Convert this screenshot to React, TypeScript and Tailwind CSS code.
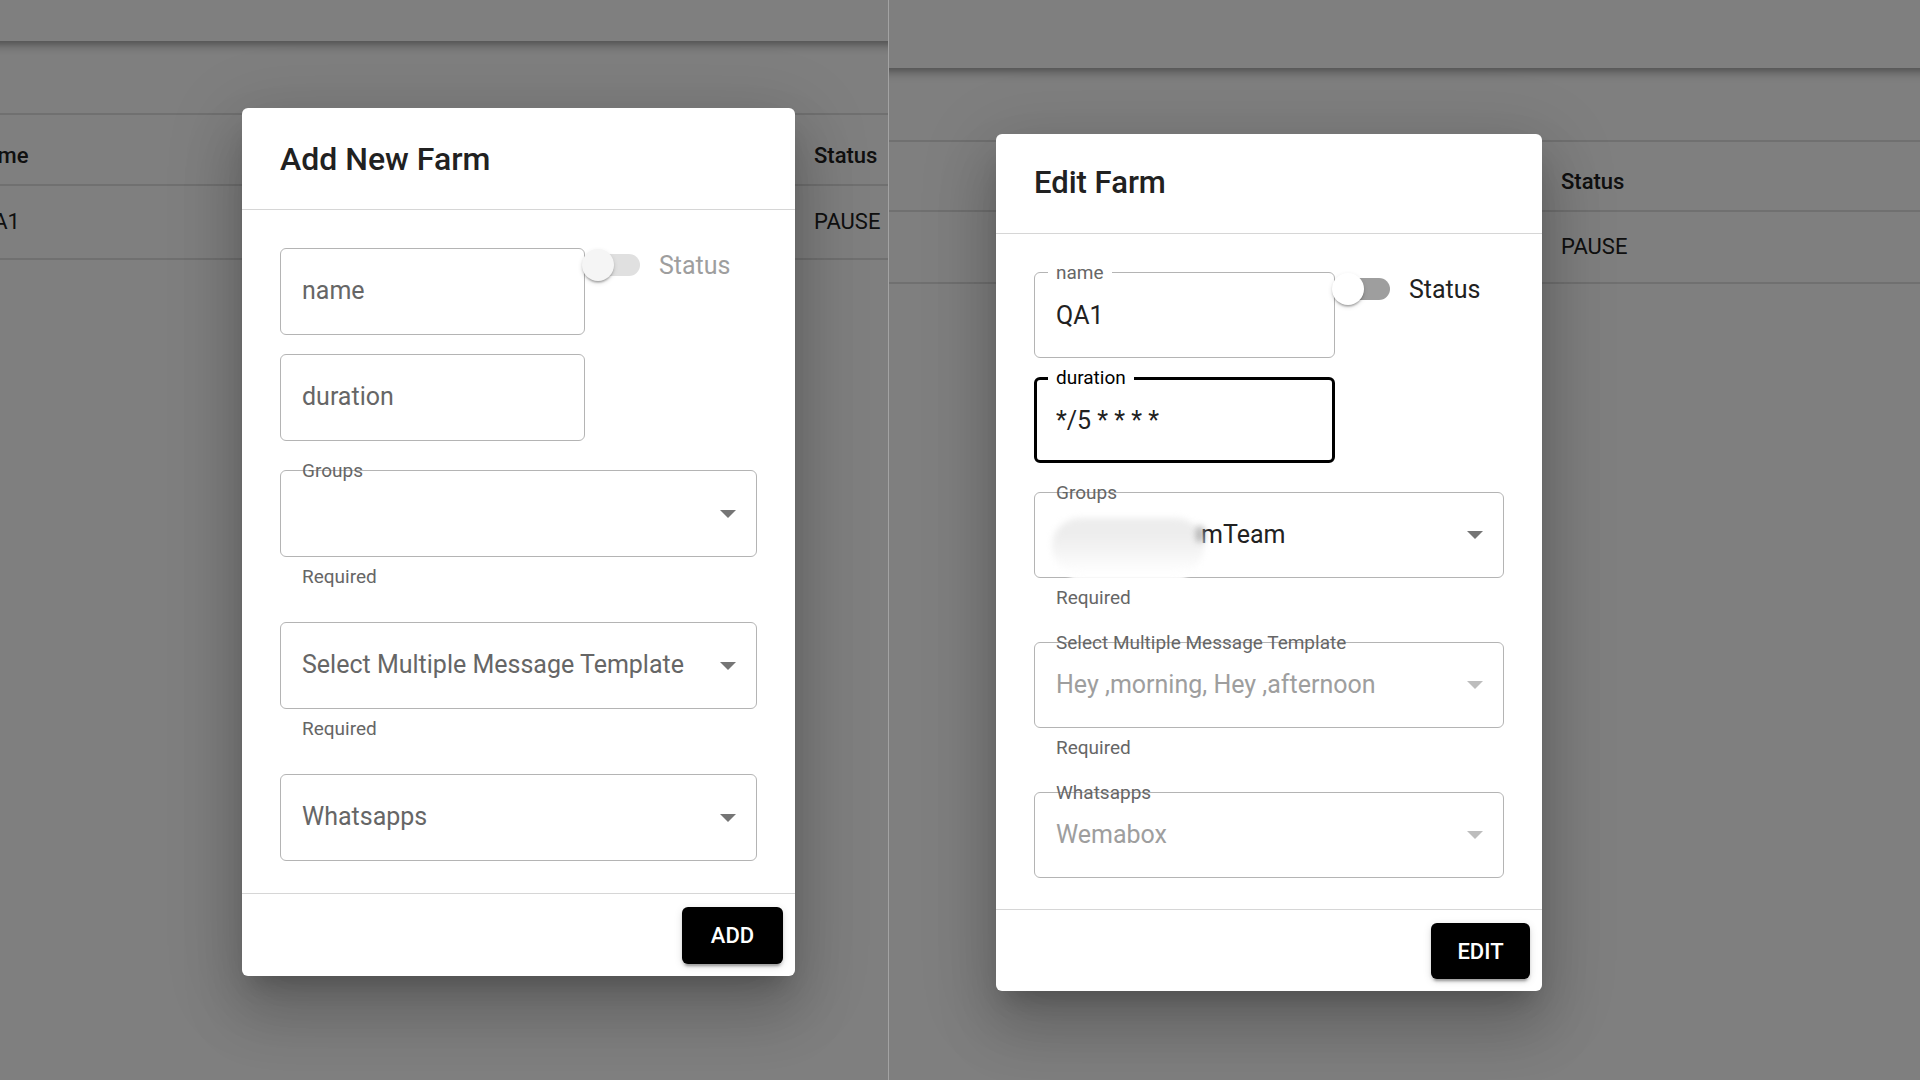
import { useId, type ReactNode } from "react";
import clsx from "clsx";

type Size = "large" | "medium";

const SIZES = {
  large: {
    dialog: "w-[553px]",
    title: "h-[101px] text-[32px]",
    body: "pb-8",
    field: "h-[87px]",
    short: "w-[305px]",
    helper: "h-[65px]",
    button: "h-[57px] w-[101px]",
  },
  medium: {
    dialog: "w-[546px]",
    title: "h-[99px] text-[31px]",
    body: "pb-[31px]",
    field: "h-[86px]",
    short: "w-[301px]",
    helper: "h-[64px]",
    button: "h-14 w-[99px]",
  },
};

function FieldLabel({
  id,
  floating,
  notched,
  focused,
  children,
}: {
  id: string;
  floating: boolean;
  notched?: boolean;
  focused?: boolean;
  children: ReactNode;
}) {
  return (
    <label
      htmlFor={id}
      className={clsx(
        "pointer-events-none absolute left-[14px] flex items-center px-2 leading-none whitespace-nowrap",
        focused ? "text-black" : "text-[#666]",
        floating ? "top-0 -translate-y-1/2 text-[19px]" : "top-0 bottom-0.5 text-[25px]",
        notched && "bg-white",
      )}
    >
      {children}
    </label>
  );
}

function TextField({
  size,
  label,
  value = "",
  focused = false,
}: {
  size: Size;
  label: string;
  value?: string;
  focused?: boolean;
}) {
  const id = useId();
  const s = SIZES[size];
  return (
    <div className={clsx("relative", s.field, s.short)}>
      <input
        id={id}
        type="text"
        defaultValue={value}
        className={clsx(
          "h-full w-full rounded-md bg-transparent text-[25px] text-[#212121] outline-none",
          focused ? "border-[3px] border-black px-[19px]" : "border border-[#b4b4b4] px-[21px]",
        )}
      />
      <FieldLabel id={id} floating={value !== ""} notched={value !== ""} focused={focused}>
        {label}
      </FieldLabel>
    </div>
  );
}

function SelectField({
  size,
  label,
  value = "",
  floating = false,
  disabled = false,
  redacted = false,
}: {
  size: Size;
  label: string;
  value?: string;
  floating?: boolean;
  disabled?: boolean;
  redacted?: boolean;
}) {
  const id = useId();
  const s = SIZES[size];
  return (
    <div className={clsx("relative", s.field)}>
      <select
        id={id}
        disabled={disabled}
        defaultValue={value}
        className={clsx(
          "h-full w-full appearance-none rounded-md border border-[#b4b4b4] bg-transparent pr-14 text-[25px] opacity-100 outline-none",
          disabled ? "text-[#9e9e9e]" : "text-[#212121]",
          redacted ? "pl-[166px]" : "pl-[21px]",
        )}
      >
        <option value={value}>{value}</option>
      </select>
      {redacted && (
        <span className="pointer-events-none absolute top-[26px] left-[18px] h-[62px] w-[152px]">
          <span className="absolute inset-x-4 bottom-0 h-4 rounded-full bg-white blur-[2px]" />
          <span className="absolute inset-x-0 top-0 h-14 rounded-[28px] bg-linear-to-b from-[#ededed] from-30% to-white blur-[3px]" />
          <span className="absolute top-2 right-0 h-4 w-2 rounded-full bg-[#8a8a8a] opacity-60 blur-[3px]" />
        </span>
      )}
      <svg
        viewBox="0 0 16 8"
        aria-hidden="true"
        className={clsx(
          "pointer-events-none absolute top-1/2 right-[21px] h-2 w-4 -translate-y-1/2",
          disabled ? "fill-[#bdbdbd]" : "fill-[#757575]",
        )}
      >
        <path d="M0 0h16L8 8z" />
      </svg>
      <FieldLabel id={id} floating={floating}>
        {label}
      </FieldLabel>
    </div>
  );
}

function Helper({ size }: { size: Size }) {
  return <p className={clsx("px-[22px] pt-1 text-[19px] leading-8 text-[#666]", SIZES[size].helper)}>Required</p>;
}

function StatusSwitch({ disabled = false }: { disabled?: boolean }) {
  const id = useId();
  return (
    <div className="ml-0.5 flex h-[34px] items-center gap-[19px] text-[25px]">
      <input
        id={id}
        type="checkbox"
        role="switch"
        disabled={disabled}
        className={clsx(
          "relative h-[22px] w-[53px] appearance-none rounded-full",
          "before:absolute before:-top-[5px] before:-left-[5px] before:size-8 before:rounded-full",
          "before:shadow-[0_3px_2px_-2px_rgba(0,0,0,0.2),0_2px_2px_rgba(0,0,0,0.14),0_2px_5px_rgba(0,0,0,0.12)]",
          disabled ? "bg-[#e0e0e0] before:bg-[#f5f5f5]" : "bg-[#9e9e9e] before:bg-white",
        )}
      />
      <label htmlFor={id} className={clsx("leading-none", disabled ? "text-[#9e9e9e]" : "text-[#212121]")}>
        Status
      </label>
    </div>
  );
}

function FarmDialog({
  size,
  title,
  action,
  children,
}: {
  size: Size;
  title: string;
  action: string;
  children: ReactNode;
}) {
  const s = SIZES[size];
  const id = useId();
  return (
    <form
      role="dialog"
      aria-labelledby={id}
      onSubmit={(event) => event.preventDefault()}
      className={clsx(
        "shrink-0 rounded-md bg-white shadow-[0_17px_23px_-11px_rgba(0,0,0,0.2),0_37px_59px_5px_rgba(0,0,0,0.14),0_14px_71px_12px_rgba(0,0,0,0.12)]",
        s.dialog,
      )}
    >
      <h2 id={id} className={clsx("flex items-center px-[38px] font-medium text-[#212121]", s.title)}>
        {title}
      </h2>
      <div className={clsx("border-y border-[#d6d6d6] px-[38px] pt-[38px]", s.body)}>{children}</div>
      <div className="flex justify-end p-3 pt-[13px]">
        <button
          type="submit"
          className={clsx(
            "rounded-md bg-black text-[22px] font-medium text-white shadow-[0_5px_2px_-3px_rgba(0,0,0,0.2),0_3px_3px_rgba(0,0,0,0.14),0_2px_8px_rgba(0,0,0,0.12)]",
            s.button,
          )}
        >
          {action}
        </button>
      </div>
    </form>
  );
}

function Backdrop({ className, children }: { className: string; children: ReactNode }) {
  return <div className={clsx("absolute inset-0 flex items-start bg-black/50", className)}>{children}</div>;
}

function AppBar({ className }: { className: string }) {
  return (
    <header
      className={clsx(
        "-mx-8 bg-white shadow-[0_3px_6px_-1px_rgba(0,0,0,0.2),0_6px_8px_rgba(0,0,0,0.14),0_2px_16px_rgba(0,0,0,0.12)]",
        className,
      )}
    />
  );
}

function FarmTable({
  name,
  firstColumn,
  headRow,
  bodyRow,
  className,
}: {
  name?: string;
  firstColumn: string;
  headRow: string;
  bodyRow: string;
  className: string;
}) {
  return (
    <table className={clsx("table-fixed border-collapse text-left text-[22px] leading-none text-[#212121]", className)}>
      <thead>
        <tr className={clsx("border-y-2 border-[#e0e0e0]", headRow)}>
          <th className={clsx("pt-3 font-medium", firstColumn)}>{name && "Name"}</th>
          <th className="pt-3 font-medium">Status</th>
        </tr>
      </thead>
      <tbody>
        <tr className={clsx("border-b-2 border-[#e0e0e0]", bodyRow)}>
          <td className="pl-2">{name}</td>
          <td>PAUSE</td>
        </tr>
      </tbody>
    </table>
  );
}

export default function App() {
  return (
    <main className="grid min-h-screen grid-cols-[888fr_1032fr] bg-white font-['Roboto',sans-serif]">
      <section className="relative overflow-hidden">
        <AppBar className="h-[41px]" />
        <FarmTable
          name="QA1"
          className="-ml-[30px] mt-[72px] w-[calc(100%+30px)]"
          firstColumn="w-[844px]"
          headRow="h-[71px]"
          bodyRow="h-[74px]"
        />
        <Backdrop className="pt-[108px] pl-[242px]">
          <FarmDialog size="large" title="Add New Farm" action="ADD">
            <div className="flex items-start">
              <TextField size="large" label="name" />
              <StatusSwitch disabled />
            </div>
            <div className="mt-[19px] mb-[29px]">
              <TextField size="large" label="duration" />
            </div>
            <SelectField size="large" label="Groups" floating />
            <Helper size="large" />
            <SelectField size="large" label="Select Multiple Message Template" />
            <Helper size="large" />
            <SelectField size="large" label="Whatsapps" />
          </FarmDialog>
        </Backdrop>
      </section>

      <section className="relative overflow-hidden">
        <AppBar className="h-[68px]" />
        <FarmTable className="mt-[72px] w-full" firstColumn="w-[673px]" headRow="h-[70px]" bodyRow="h-[72px]" />
        <Backdrop className="border-l border-[#a3a3a3] pt-[134px] pl-[107px]">
          <FarmDialog size="medium" title="Edit Farm" action="EDIT">
            <div className="flex items-start">
              <TextField size="medium" label="name" value="QA1" />
              <StatusSwitch />
            </div>
            <div className="mt-[19px] mb-[29px]">
              <TextField size="medium" label="duration" value="*/5 * * * *" focused />
            </div>
            <SelectField size="medium" label="Groups" value="mTeam" floating redacted />
            <Helper size="medium" />
            <SelectField
              size="medium"
              label="Select Multiple Message Template"
              value="Hey ,morning, Hey ,afternoon"
              floating
              disabled
            />
            <Helper size="medium" />
            <SelectField size="medium" label="Whatsapps" value="Wemabox" floating disabled />
          </FarmDialog>
        </Backdrop>
      </section>
    </main>
  );
}
